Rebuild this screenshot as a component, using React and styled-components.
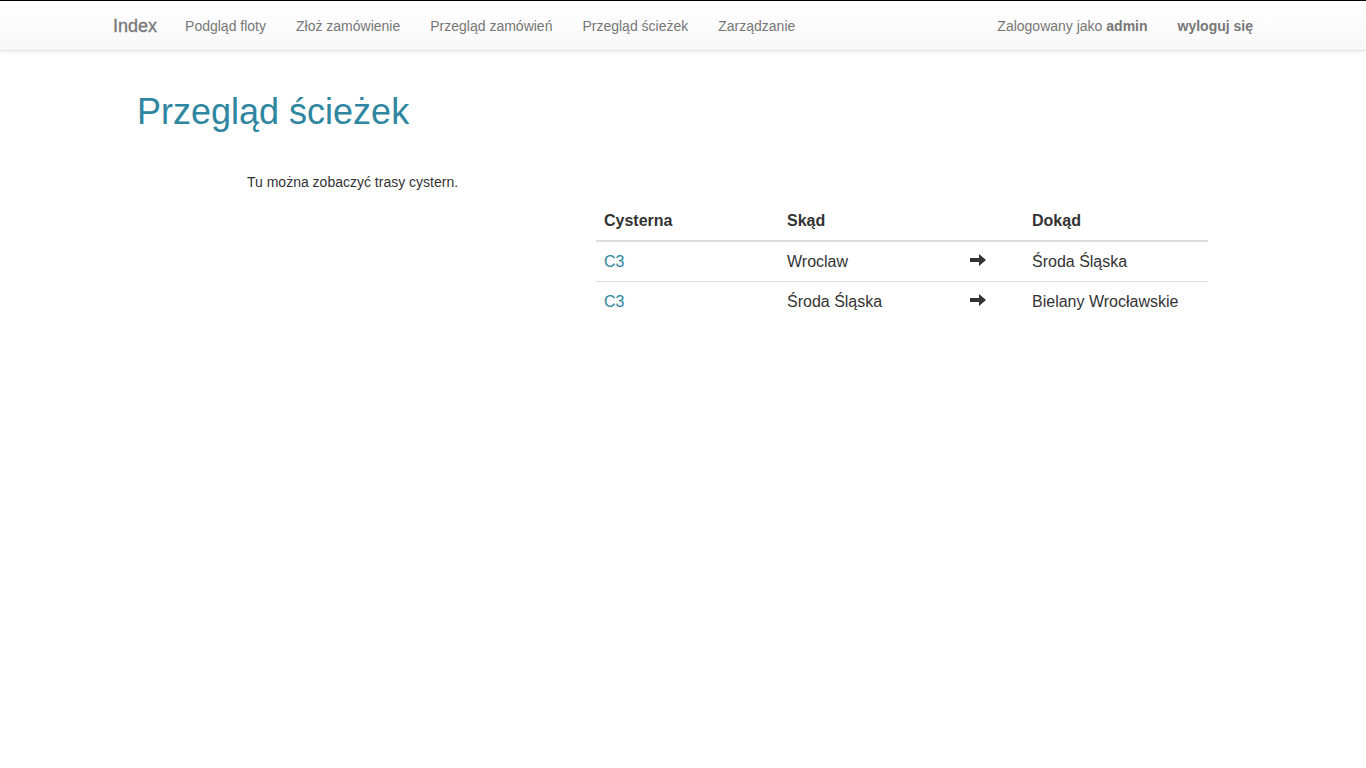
import React from "react";
import styled, { createGlobalStyle } from "styled-components";

const GlobalStyle = createGlobalStyle`
  * { box-sizing: border-box; }
  body {
    margin: 0;
    font-family: "Liberation Sans", Arial, Helvetica, sans-serif;
    font-size: 14px;
    line-height: 1.42857;
    color: #333;
    background: #fff;
  }
`;

const Navbar = styled.nav`
  height: 51px;
  border-top: 1px solid #000;
  border-bottom: 1px solid #e4e4e4;
  background: linear-gradient(to bottom, #fff 0, #f8f8f8 100%);
  box-shadow: 0 1px 5px rgba(0, 0, 0, 0.075);
`;

const Container = styled.div`
  width: 1170px;
  margin: 0 auto;
  padding: 0 15px;
`;

const NavInner = styled(Container)`
  display: flex;
  align-items: center;
  height: 50px;
`;

const Brand = styled.a`
  font-size: 18px;
  color: #777;
  padding-right: 13px;
  line-height: 20px;
  text-decoration: none;
  -webkit-text-stroke: 0.3px #777;
`;

const NavList = styled.ul`
  display: flex;
  list-style: none;
  margin: 0;
  padding: 0;
  margin-left: ${(p) => (p.$right ? "auto" : "0")};
  margin-right: ${(p) => (p.$right ? "-15px" : "0")};
`;

const NavLink = styled.a`
  display: block;
  padding: 15px;
  line-height: 20px;
  color: #777;
  text-decoration: none;
  font-weight: ${(p) => (p.$bold ? "bold" : "normal")};
`;

const Main = styled(Container)`
  padding-top: 20px;
`;

const Title = styled.h1`
  margin: 21px 0 0 24px;
  font-size: 36px;
  font-weight: normal;
  line-height: 1.1;
  color: #2e86a0;
`;

const Intro = styled.p`
  margin: 41px 0 0 134px;
`;

const TableWrap = styled.div`
  display: flex;
  justify-content: flex-end;
  margin-right: 45px;
  margin-top: 8px;
`;

const Table = styled.table`
  width: 612px;
  border-collapse: collapse;
  font-size: 16px;
  line-height: 23px;
`;

const Th = styled.th`
  text-align: left;
  padding: 8px;
  border-bottom: 2px solid #ddd;
  font-weight: bold;
  width: ${(p) => p.$w}px;
`;

const Td = styled.td`
  padding: 8px;
  border-top: ${(p) => (p.$first ? "none" : "1px solid #ddd")};
  color: #333;
`;

const Link = styled.a`
  color: #2e86a0;
  text-decoration: none;
`;

const ArrowIcon = styled.svg`
  display: block;
  margin-top: -3px;
`;

const Arrow = () => (
  <ArrowIcon width="16" height="12" viewBox="0 0 16 12">
    <path d="M0 4 H9 V0 L16 6 L9 12 V8 H0 Z" fill="#333" />
  </ArrowIcon>
);

const routes = [
  { tank: "C3", from: "Wroclaw", to: "Środa Śląska" },
  { tank: "C3", from: "Środa Śląska", to: "Bielany Wrocławskie" },
];

export default function App() {
  return (
    <>
      <GlobalStyle />
      <Navbar>
        <NavInner>
          <Brand href="#">Index</Brand>
          <NavList>
            <li><NavLink href="#">Podgląd floty</NavLink></li>
            <li><NavLink href="#">Złoż zamówienie</NavLink></li>
            <li><NavLink href="#">Przegląd zamówień</NavLink></li>
            <li><NavLink href="#">Przegląd ścieżek</NavLink></li>
            <li><NavLink href="#">Zarządzanie</NavLink></li>
          </NavList>
          <NavList $right>
            <li>
              <NavLink as="span">
                Zalogowany jako <b>admin</b>
              </NavLink>
            </li>
            <li><NavLink href="#" $bold>wyloguj się</NavLink></li>
          </NavList>
        </NavInner>
      </Navbar>
      <Main>
        <Title>Przegląd ścieżek</Title>
        <Intro>Tu można zobaczyć trasy cystern.</Intro>
        <TableWrap>
          <Table>
            <thead>
              <tr>
                <Th $w={183}>Cysterna</Th>
                <Th $w={183}>Skąd</Th>
                <Th $w={62}></Th>
                <Th $w={184}>Dokąd</Th>
              </tr>
            </thead>
            <tbody>
              {routes.map((r, i) => (
                <tr key={i}>
                  <Td $first={i === 0}><Link href="#">{r.tank}</Link></Td>
                  <Td $first={i === 0}>{r.from}</Td>
                  <Td $first={i === 0}><Arrow /></Td>
                  <Td $first={i === 0}>{r.to}</Td>
                </tr>
              ))}
            </tbody>
          </Table>
        </TableWrap>
      </Main>
    </>
  );
}
